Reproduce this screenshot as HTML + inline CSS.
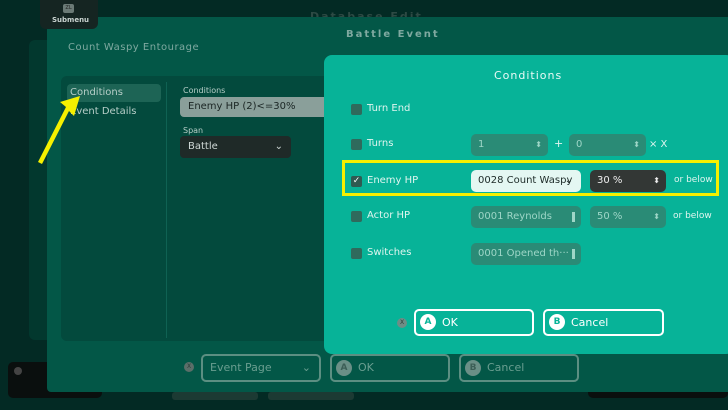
<!DOCTYPE html><html><head><style>
*{box-sizing:border-box;margin:0;padding:0}
body{width:728px;height:410px;overflow:hidden;background:#032a24;font-family:"DejaVu Sans","Liberation Sans",sans-serif;position:relative}
.a{position:absolute}
.cb{position:absolute;width:11px;height:11px;border-radius:2px;background:#2f6a5c}
.lbl{position:absolute;font-size:10px;color:#dff5ef}
.fld{position:absolute;height:22px;border-radius:5px;background:#2a8b76;color:#9ed6c7;font-size:10px;line-height:22px;padding-left:7px}
.btn{position:absolute;height:27px;border:2px solid #fff;border-radius:5px;color:#fff;font-size:11px;line-height:23px;padding-left:26px}
.circ{position:absolute;left:4px;top:3px;width:16px;height:16px;border-radius:50%;background:#fff;color:#07b398;font-size:9px;line-height:16px;text-align:center;font-weight:bold}
.bbtn{position:absolute;top:354px;height:28px;border:2px solid #5c8f82;border-radius:5px;color:#6a9e90;font-size:11px;line-height:24px;padding-left:26px}
.bc{position:absolute;left:4px;top:4px;width:16px;height:16px;border-radius:50%;background:#6a8f86;color:#3c5e56;font-size:9px;line-height:16px;text-align:center;font-weight:bold}
</style></head><body>
<div class="a" style="left:8px;top:362px;width:94px;height:36px;background:#0a0f0e;border-radius:5px"></div>
<div class="a" style="left:14px;top:367px;width:8px;height:8px;border-radius:50%;background:#444"></div>
<div class="a" style="left:588px;top:362px;width:140px;height:36px;background:#0a0f0e;border-radius:5px"></div>
<div class="a" style="left:172px;top:392px;width:86px;height:8px;background:#1c3a33;border-radius:3px"></div>
<div class="a" style="left:268px;top:392px;width:86px;height:8px;background:#1c3a33;border-radius:3px"></div>
<div class="a" style="left:29px;top:40px;width:30px;height:300px;background:#02382e;border-radius:6px"></div>
<div class="a" style="left:310px;top:10px;font-size:11px;color:#2d4a44;font-weight:bold;letter-spacing:2px">Database Edit</div>
<div class="a" style="left:47px;top:17px;width:690px;height:375px;background:#035747;border-radius:4px"></div>
<div class="a" style="left:40px;top:0;width:58px;height:29px;background:#152522;border-radius:0 0 6px 6px"></div>
<div class="a" style="left:63px;top:4px;width:11px;height:9px;background:#6b7a76;border-radius:2px;font-size:5px;color:#222;text-align:center;line-height:9px">ZL</div>
<div class="a" style="left:52px;top:16px;font-size:7px;color:#c9d3d0;font-weight:bold">Submenu</div>
<div class="a" style="left:68px;top:42px;font-size:10px;color:#7fa9a0;letter-spacing:.5px">Count Waspy Entourage</div>
<div class="a" style="left:346px;top:29px;font-size:10px;color:#7fa9a0;font-weight:bold;letter-spacing:2px">Battle Event</div>
<div class="a" style="left:61px;top:76px;width:280px;height:265px;background:#034a3d;border-radius:6px"></div>
<div class="a" style="left:166px;top:82px;width:1px;height:256px;background:#0f6253"></div>
<div class="a" style="left:67px;top:84px;width:94px;height:18px;background:#1d6455;border-radius:4px"></div>
<div class="a" style="left:70px;top:87px;font-size:10px;color:#b7cec8">Conditions</div>
<div class="a" style="left:70px;top:106px;font-size:10px;color:#b7cec8">Event Details</div>
<div class="a" style="left:183px;top:86px;font-size:8px;color:#b7cec8">Conditions</div>
<div class="a" style="left:180px;top:97px;width:150px;height:20px;background:#8a9f9a;border-radius:4px;font-size:10px;color:#1b2624;line-height:20px;padding-left:8px">Enemy HP (2)&lt;=30%</div>
<div class="a" style="left:183px;top:126px;font-size:8px;color:#b7cec8">Span</div>
<div class="a" style="left:180px;top:136px;width:111px;height:22px;background:#1f2a28;border-radius:4px;font-size:10px;color:#cfd8d6;line-height:22px;padding-left:8px">Battle<span style="position:absolute;right:8px;top:0">⌄</span></div>
<svg class="a" style="left:36px;top:94px" width="46" height="72"><polygon points="44,2 24,8 30,13 2,68 6,70 33,17 38,22" fill="#f5f000"/></svg>
<div class="bbtn" style="left:201px;width:120px;padding-left:7px">Event Page<span style="position:absolute;right:8px">⌄</span></div>
<div class="a" style="left:184px;top:362px;width:10px;height:10px;border-radius:50%;background:#5b6e69;font-size:6px;color:#2a3a36;text-align:center;line-height:10px">X</div>
<div class="bbtn" style="left:330px;width:120px"><span class="bc">A</span>OK</div>
<div class="bbtn" style="left:459px;width:120px"><span class="bc">B</span>Cancel</div>
<div class="a" style="left:324px;top:55px;width:410px;height:299px;background:#07b398;border-radius:8px"></div>
<div class="a" style="left:494px;top:69px;font-size:11px;color:#eafaf6;letter-spacing:1px">Conditions</div>
<div class="cb" style="left:351px;top:104px"></div><div class="lbl" style="left:367px;top:103px">Turn End</div>
<div class="cb" style="left:351px;top:139px"></div><div class="lbl" style="left:367px;top:138px">Turns</div>
<div class="fld" style="left:471px;top:134px;width:77px">1<span style="position:absolute;right:6px;font-size:8px">⬍</span></div>
<div class="a" style="left:554px;top:137px;color:#dff5ef;font-size:11px">+</div>
<div class="fld" style="left:569px;top:134px;width:77px">0<span style="position:absolute;right:6px;font-size:8px">⬍</span></div>
<div class="a" style="left:649px;top:139px;color:#dff5ef;font-size:10px">× X</div>
<div class="a" style="left:342px;top:160px;width:377px;height:36px;border:3px solid #f5f000"></div>
<div class="cb" style="left:351px;top:176px;background:#2f5a52;color:#fff;font-size:9px;line-height:11px;text-align:center">✓</div>
<div class="lbl" style="left:367px;top:175px">Enemy HP</div>
<div class="fld" style="left:471px;top:170px;width:110px;background:#e4f7f2;color:#1d2b28;font-size:10px">0028 Count Waspy<span style="position:absolute;right:8px">⌄</span></div>
<div class="fld" style="left:590px;top:170px;width:76px;background:#333735;color:#eee">30 %<span style="position:absolute;right:6px;font-size:8px">⬍</span></div>
<div class="lbl" style="left:674px;top:175px;font-size:9px">or below</div>
<div class="cb" style="left:351px;top:211px"></div><div class="lbl" style="left:367px;top:210px">Actor HP</div>
<div class="fld" style="left:471px;top:206px;width:110px">0001 Reynolds<span style="position:absolute;right:6px;top:6px;width:3px;height:10px;background:#9ed6c7"></span></div>
<div class="fld" style="left:590px;top:206px;width:76px">50 %<span style="position:absolute;right:6px;font-size:8px">⬍</span></div>
<div class="lbl" style="left:673px;top:211px;font-size:9px">or below</div>
<div class="cb" style="left:351px;top:248px"></div><div class="lbl" style="left:367px;top:247px">Switches</div>
<div class="fld" style="left:471px;top:243px;width:110px">0001 Opened th···<span style="position:absolute;right:6px;top:6px;width:3px;height:10px;background:#9ed6c7"></span></div>
<div class="a" style="left:397px;top:318px;width:10px;height:10px;border-radius:50%;background:#6e8d86;font-size:6px;color:#2a3a36;text-align:center;line-height:10px">X</div>
<div class="btn" style="left:414px;top:309px;width:120px"><span class="circ">A</span>OK</div>
<div class="btn" style="left:543px;top:309px;width:121px"><span class="circ">B</span>Cancel</div>
</body></html>
